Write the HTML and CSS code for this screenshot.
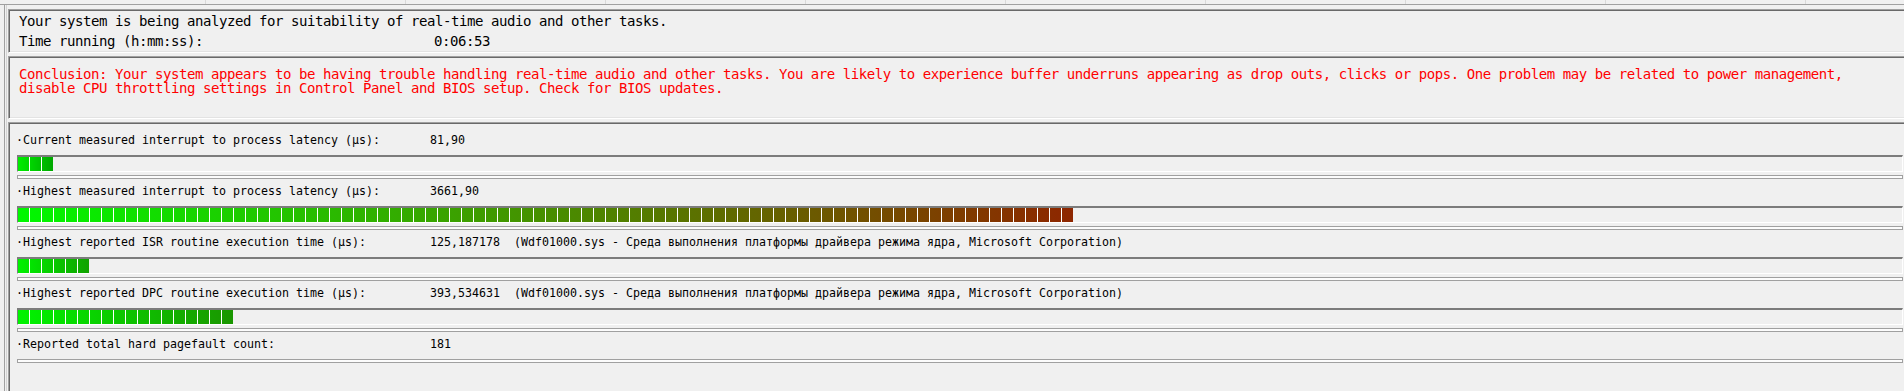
FILE: index.html
```html
<!DOCTYPE html>
<html lang="en">
<head>
    <meta charset="UTF-8">
    <meta name="viewport" content="width=device-width, initial-scale=1.0">
    <title>Latency monitor</title>
    <link rel="stylesheet" href="styles.css">
</head>
<body>
    <div class="ruler"></div>
    <div class="frame">
        <div class="panel panel-status">
            <div class="status-line">Your system is being analyzed for suitability of real-time audio and other tasks.</div>
            <div class="status-line"><span class="key">Time running (h:mm:ss):</span><span>0:06:53</span></div>
        </div>

        <div class="panel panel-conclusion">
            <p>Conclusion: Your system appears to be having trouble handling real-time audio and other tasks. You are likely to experience buffer underruns appearing as drop outs, clicks or pops. One problem may be related to power management,<br>disable CPU throttling settings in Control Panel and BIOS setup. Check for BIOS updates.</p>
        </div>

        <div class="panel panel-stats">
            <div class="stat">
                <div class="stat-label"><span class="name">·Current measured interrupt to process latency (µs):</span><span>81,90</span></div>
                <div class="meter"><div class="meter-fill" style="width: 35px; --from: #00ee00; --to: #00a800;"></div></div>
                <div class="rule"></div>
            </div>
            <div class="stat">
                <div class="stat-label"><span class="name">·Highest measured interrupt to process latency (µs):</span><span>3661,90</span></div>
                <div class="meter"><div class="meter-fill" style="width: 1055px; --from: #00f800; --to: #8e2600;"></div></div>
                <div class="rule"></div>
            </div>
            <div class="stat">
                <div class="stat-label"><span class="name">·Highest reported ISR routine execution time (µs):</span><span>125,187178&nbsp;&nbsp;(Wdf01000.sys - Среда выполнения платформы драйвера режима ядра, Microsoft Corporation)</span></div>
                <div class="meter"><div class="meter-fill" style="width: 71px; --from: #00f200; --to: #10a200;"></div></div>
                <div class="rule"></div>
            </div>
            <div class="stat">
                <div class="stat-label"><span class="name">·Highest reported DPC routine execution time (µs):</span><span>393,534631&nbsp;&nbsp;(Wdf01000.sys - Среда выполнения платформы драйвера режима ядра, Microsoft Corporation)</span></div>
                <div class="meter"><div class="meter-fill" style="width: 215px; --from: #00f400; --to: #1a9600;"></div></div>
                <div class="rule"></div>
            </div>
            <div class="stat">
                <div class="stat-label"><span class="name">·Reported total hard pagefault count:</span><span>181</span></div>
                <div class="rule rule-only"></div>
            </div>
        </div>
    </div>
</body>
</html>
```

FILE: styles.css
```css
body {
    margin: 0;
    background-color: #f0f0f0;
    color: #000;
    font-family: "DejaVu Sans Mono", monospace;
    overflow: hidden;
}

/* faint column ticks of the list above */
.ruler {
    height: 4px;
    border-bottom: 1px solid #a0a0a0;
    background: repeating-linear-gradient(90deg, transparent 0 199px, #d9d9d9 199px 200px);
    background-position: 6px 0;
}

.frame {
    margin: 0 -10px 0 4px;
    padding: 4px 0 0 3px;
    border-left: 1px solid #a0a0a0;
    box-shadow: inset 1px 0 #f0f0f0, inset 2px 0 #d4d4d4;
}

/* sunken 3d box */
.panel {
    box-sizing: border-box;
    border: 1px solid;
    border-color: #a0a0a0 #fff #fff #a0a0a0;
    box-shadow: inset 1px 1px #696969, inset -1px -1px #e3e3e3;
    margin-bottom: 3px;
}

.panel-status {
    height: 44px;
    padding: 1px 0 0 10px;
    font-size: 14px;
    letter-spacing: -0.43px;
    line-height: 20px;
}

.status-line {
    display: flex;
    white-space: pre;
}

.status-line .key {
    width: 415px;
}

.panel-conclusion {
    height: 63px;
    padding: 10px 0 0 10px;
}

.panel-conclusion p {
    margin: 0;
    color: #ff0000;
    font-size: 14px;
    letter-spacing: -0.43px;
    line-height: 14px;
    white-space: nowrap;
}

.panel-stats {
    height: 320px;
    padding: 8px 10px 0 8px;
    font-size: 11.63px;
}

.stat {
    padding-bottom: 3px;
}

.stat-label {
    display: flex;
    height: 19px;
    line-height: 19px;
    margin-left: -1px;
    white-space: pre;
}

.stat-label .name {
    width: 414px;
}

.meter {
    height: 14px;
    margin-top: 5px;
    border-style: solid;
    border-width: 2px 1px 1px 1px;
    border-color: #7c7c7c #fff #fff #7c7c7c;
    background-color: #f0f0f0;
}

.meter-fill {
    height: 100%;
    background:
        repeating-linear-gradient(90deg, transparent 0 11px, #fff 11px 12px),
        linear-gradient(90deg, var(--from), var(--to));
}

.rule {
    height: 2px;
    margin-top: 3px;
    border: 1px solid #a0a0a0;
    background-color: #fcfcfc;
}

.rule-only {
    margin-top: 5px;
}
```
